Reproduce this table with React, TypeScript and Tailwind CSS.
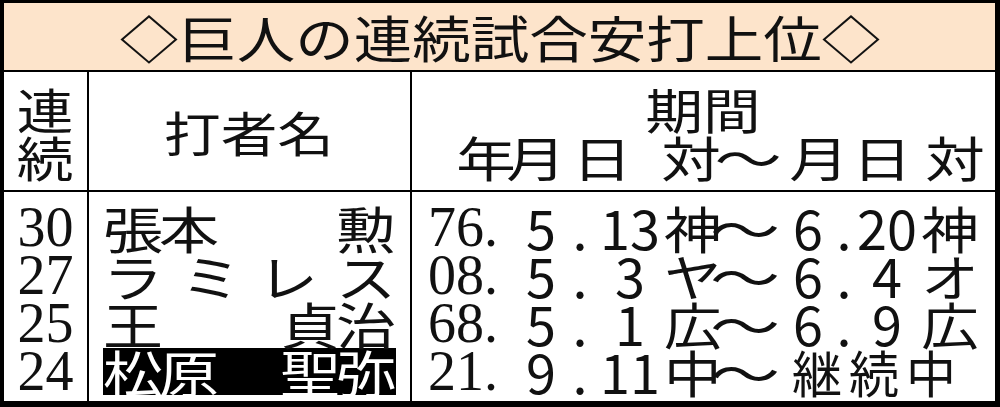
import React from "react"

const jp = "font-['Noto_Sans_CJK_JP',sans-serif]"
const serif = "font-['Liberation_Serif',serif]"

type Row = {
  n: string
  family?: string[]
  given?: string[]
  kata?: string[]
  hl?: boolean
  y: string
  m1: string
  d1: string
  t1: string
  m2?: string
  d2?: string
  t2?: string
}

const rows: Row[] = [
  { n: "30", family: ["張", "本"], given: ["勲"], y: "76.", m1: "5", d1: "13", t1: "神", m2: "6", d2: "20", t2: "神" },
  { n: "27", kata: ["ラ", "ミ", "レ", "ス"], y: "08.", m1: "5", d1: "3", t1: "ヤ", m2: "6", d2: "4", t2: "オ" },
  { n: "25", family: ["王"], given: ["貞", "治"], y: "68.", m1: "5", d1: "1", t1: "広", m2: "6", d2: "9", t2: "広" },
  { n: "24", family: ["松", "原"], given: ["聖", "弥"], hl: true, y: "21.", m1: "9", d1: "11", t1: "中" },
]

function Ch({ c }: { c: string }) {
  return (
    <span className="flex w-[56px] justify-center">
      <span className="inline-block scale-x-[1.2]">{c}</span>
    </span>
  )
}

function HeadCh({ c, className = "" }: { c: string; className?: string }) {
  return (
    <span className={`flex w-[50px] shrink-0 justify-center ${className}`}>
      <span className="inline-block scale-x-[1.24]">{c}</span>
    </span>
  )
}

export default function App() {
  return (
    <div className={`flex h-[407px] w-[1000px] flex-col border-t-[3px] border-b-[6px] border-l-4 border-r-[5px] border-black bg-white text-[#111] ${jp}`}>
      {/* Title */}
      <div className="flex h-[69px] shrink-0 items-center justify-center border-b-2 border-black bg-[#fde4cb]">
        <span className="inline-block -translate-y-[1px] scale-x-[1.17] text-[50px] leading-none">◇巨人の連続試合安打上位◇</span>
      </div>

      {/* Column headings */}
      <div className="grid h-[120px] shrink-0 grid-cols-[85px_323px_1fr] border-b-2 border-black">
        <div className="flex flex-col items-center border-r-2 border-black pt-[12px] text-[48px] leading-[48px]">
          <span className="inline-block scale-x-[1.18]">連</span>
          <span className="inline-block scale-x-[1.18]">続</span>
        </div>
        <div className="flex items-center justify-center border-r-2 border-black text-[48px] leading-none">
          <span className="inline-block scale-x-[1.18]">打者名</span>
        </div>
        <div className="flex flex-col pt-[12px] text-[48px] leading-[48px]">
          <div className="flex justify-center">
            <span className="inline-block scale-x-[1.2]">期間</span>
          </div>
          <div className="flex pl-[49px]">
            <HeadCh c="年" />
            <HeadCh c="月" />
            <HeadCh c="日" className="ml-[16px]" />
            <HeadCh c="対" className="ml-[39px]" />
            <span className="ml-[7px] flex w-[50px] shrink-0 justify-center">
              <span className="inline-block scale-x-[1.4]">～</span>
            </span>
            <HeadCh c="月" className="ml-[21px]" />
            <HeadCh c="日" className="ml-[13px]" />
            <HeadCh c="対" className="ml-[23px]" />
          </div>
        </div>
      </div>

      {/* Body */}
      <div className="grid flex-1 grid-cols-[85px_323px_1fr]">
        <div className={`flex flex-col items-center border-r-2 border-black pt-[11px] ${serif} text-[56px]`}>
          {rows.map((r) => (
            <div key={r.n} className="flex h-[48px] items-center leading-[48px]">
              {r.n}
            </div>
          ))}
        </div>

        <div className="flex flex-col border-r-2 border-black pt-[11px] text-[50px] leading-[48px]">
          {rows.map((r) => (
            <div key={r.n} className="flex h-[48px] items-center px-[14px]">
              <div className={`flex h-[47px] w-full items-center justify-between px-[2px] ${r.hl ? "bg-black text-white" : ""}`}>
                {r.kata ? (
                  r.kata.map((c) => <Ch key={c} c={c} />)
                ) : (
                  <>
                    <div className="flex">{r.family!.map((c) => <Ch key={c} c={c} />)}</div>
                    <div className="flex">{r.given!.map((c) => <Ch key={c} c={c} />)}</div>
                  </>
                )}
              </div>
            </div>
          ))}
        </div>

        <div className="flex flex-col pt-[11px] leading-[48px]">
          {rows.map((r) => (
            <div
              key={r.n}
              className="grid h-[48px] grid-cols-[106px_46px_32px_68px_50px_66px_56px_16px_70px_56px] items-center"
            >
              <span className={`pl-[16px] ${serif} text-[56px]`}>{r.y}</span>
              <span className="flex justify-center text-[54px]">{r.m1}</span>
              <span className="flex justify-center text-[54px]">.</span>
              <span className="flex justify-center text-[54px]">{r.d1}</span>
              <span className="flex justify-start text-[50px]">
                <span className="inline-block origin-left scale-x-[1.15]">{r.t1}</span>
              </span>
              <span className="flex justify-end text-[50px]">
                <span className="inline-block origin-right scale-x-[1.4]">～</span>
              </span>
              {r.m2 ? (
                <>
                  <span className="flex justify-center text-[54px]">{r.m2}</span>
                  <span className="flex justify-center text-[54px]">.</span>
                  <span className="flex justify-center text-[54px]">{r.d2}</span>
                  <span className="flex justify-center text-[50px]">
                    <span className="inline-block scale-x-[1.15]">{r.t2}</span>
                  </span>
                </>
              ) : (
                <span className="col-span-4 pl-[12px] text-[50px] tracking-[7px]">継続中</span>
              )}
            </div>
          ))}
        </div>
      </div>
    </div>
  )
}
